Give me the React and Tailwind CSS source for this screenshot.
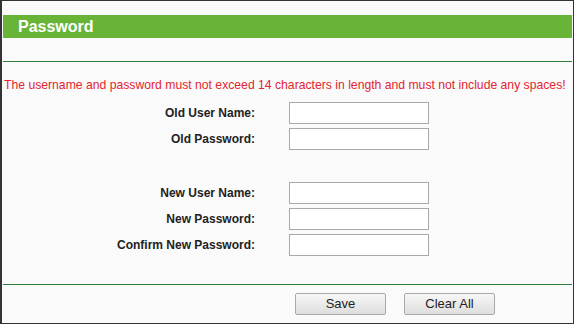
const oldFields = ["Old User Name:", "Old Password:"];
const newFields = ["New User Name:", "New Password:", "Confirm New Password:"];

const Row = ({ label }) => (
  <div className="flex items-center h-[26px]">
    <div className="w-[253px] text-right text-[12px] font-bold text-[#222]">{label}</div>
    <input
      type="text"
      className="ml-[34px] w-[140px] h-[22px] bg-white border border-[#a9a9a9] outline-none"
    />
  </div>
);

const Button = ({ children, className }) => (
  <button
    className={
      "w-[91px] h-[22px] text-[13px] text-[#222] border border-[#a9a9a9] rounded-[2px] bg-gradient-to-b from-[#f7f7f7] to-[#dedede] " +
      className
    }
  >
    {children}
  </button>
);

export default function App() {
  return (
    <div
      className="w-[574px] h-[324px] bg-[#fafafa] border-t border-l-2 border-r border-b border-[#333] flex flex-col"
      style={{ fontFamily: '"Liberation Sans", Arial, sans-serif' }}
    >
      <div className="mt-[14px] mx-[1px] h-[23px] bg-[#67b437] flex items-center pl-[15px]">
        <span className="text-white font-bold text-[16px]">Password</span>
      </div>

      <div className="mt-[23px] mx-[1px] h-px bg-[#2f7d3a]" />

      <p className="mt-[16px] ml-[2px] text-[12.2px] text-[#e3252f] leading-[14px] whitespace-nowrap">
        The username and password must not exceed 14 characters in length and must not include any spaces!
      </p>

      <div className="mt-[8px] flex flex-col">
        {oldFields.map((f) => (
          <Row key={f} label={f} />
        ))}
      </div>

      <div className="mt-[28px] flex flex-col">
        {newFields.map((f) => (
          <Row key={f} label={f} />
        ))}
      </div>

      <div className="mt-[26px] mx-[1px] h-px bg-[#2f7d3a]" />

      <div className="mt-[8px] flex">
        <Button className="ml-[293px]">Save</Button>
        <Button className="ml-[18px]">Clear All</Button>
      </div>
    </div>
  );
}
